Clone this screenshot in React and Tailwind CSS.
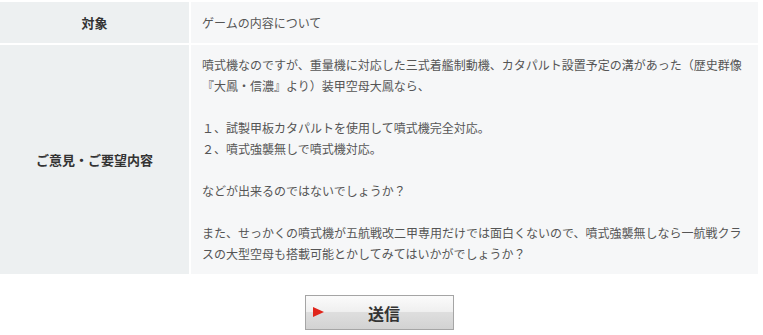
export default function App() {
  const font = { fontFamily: '"Noto Sans CJK JP", "Noto Sans", sans-serif' };
  return (
    <div className="w-[763px] h-[335px] bg-white pt-[2px]" style={font}>
      <div className="w-[758px] flex flex-col gap-[2px]">
        <div className="flex gap-[2px] h-[41px]">
          <div className="w-[189px] bg-[#edf0f1] flex items-center justify-center text-[13px] font-bold text-[#333]">
            対象
          </div>
          <div className="flex-1 bg-[#f6f7f8] flex items-center pl-[11px] text-[12px] text-[#555]">
            ゲームの内容について
          </div>
        </div>
        <div className="flex gap-[2px] h-[229px]">
          <div className="w-[189px] bg-[#edf0f1] flex items-center justify-center text-[13px] font-bold text-[#333]">
            ご意見・ご要望内容
          </div>
          <div className="flex-1 bg-[#f6f7f8] pl-[11px] pt-[9px] text-[12px] leading-[21px] text-[#555] whitespace-nowrap">
            噴式機なのですが、重量機に対応した三式着艦制動機、カタパルト設置予定の溝があった（歴史群像
            <br />
            『大鳳・信濃』より）装甲空母大鳳なら、
            <br />
            <br />
            １、試製甲板カタパルトを使用して噴式機完全対応。
            <br />
            ２、噴式強襲無しで噴式機対応。
            <br />
            <br />
            などが出来るのではないでしょうか？
            <br />
            <br />
            また、せっかくの噴式機が五航戦改二甲専用だけでは面白くないので、噴式強襲無しなら一航戦クラ
            <br />
            スの大型空母も搭載可能とかしてみてはいかがでしょうか？
          </div>
        </div>
      </div>
      <div className="flex justify-center pt-[21px] pr-[5px]">
        <button className="relative w-[149px] h-[35px] border border-[#a5a5a5] bg-[linear-gradient(to_bottom,#fbfbfb_0%,#efefef_48%,#dedede_50%,#d2d2d2_100%)] flex items-center justify-center pl-[10px] text-[16px] font-bold text-[#333]">
          <span className="absolute left-[7px] top-[11px] w-0 h-0 border-t-[5.5px] border-b-[5.5px] border-l-[11px] border-t-transparent border-b-transparent border-l-[#e0251b]" />
          送信
        </button>
      </div>
    </div>
  );
}
